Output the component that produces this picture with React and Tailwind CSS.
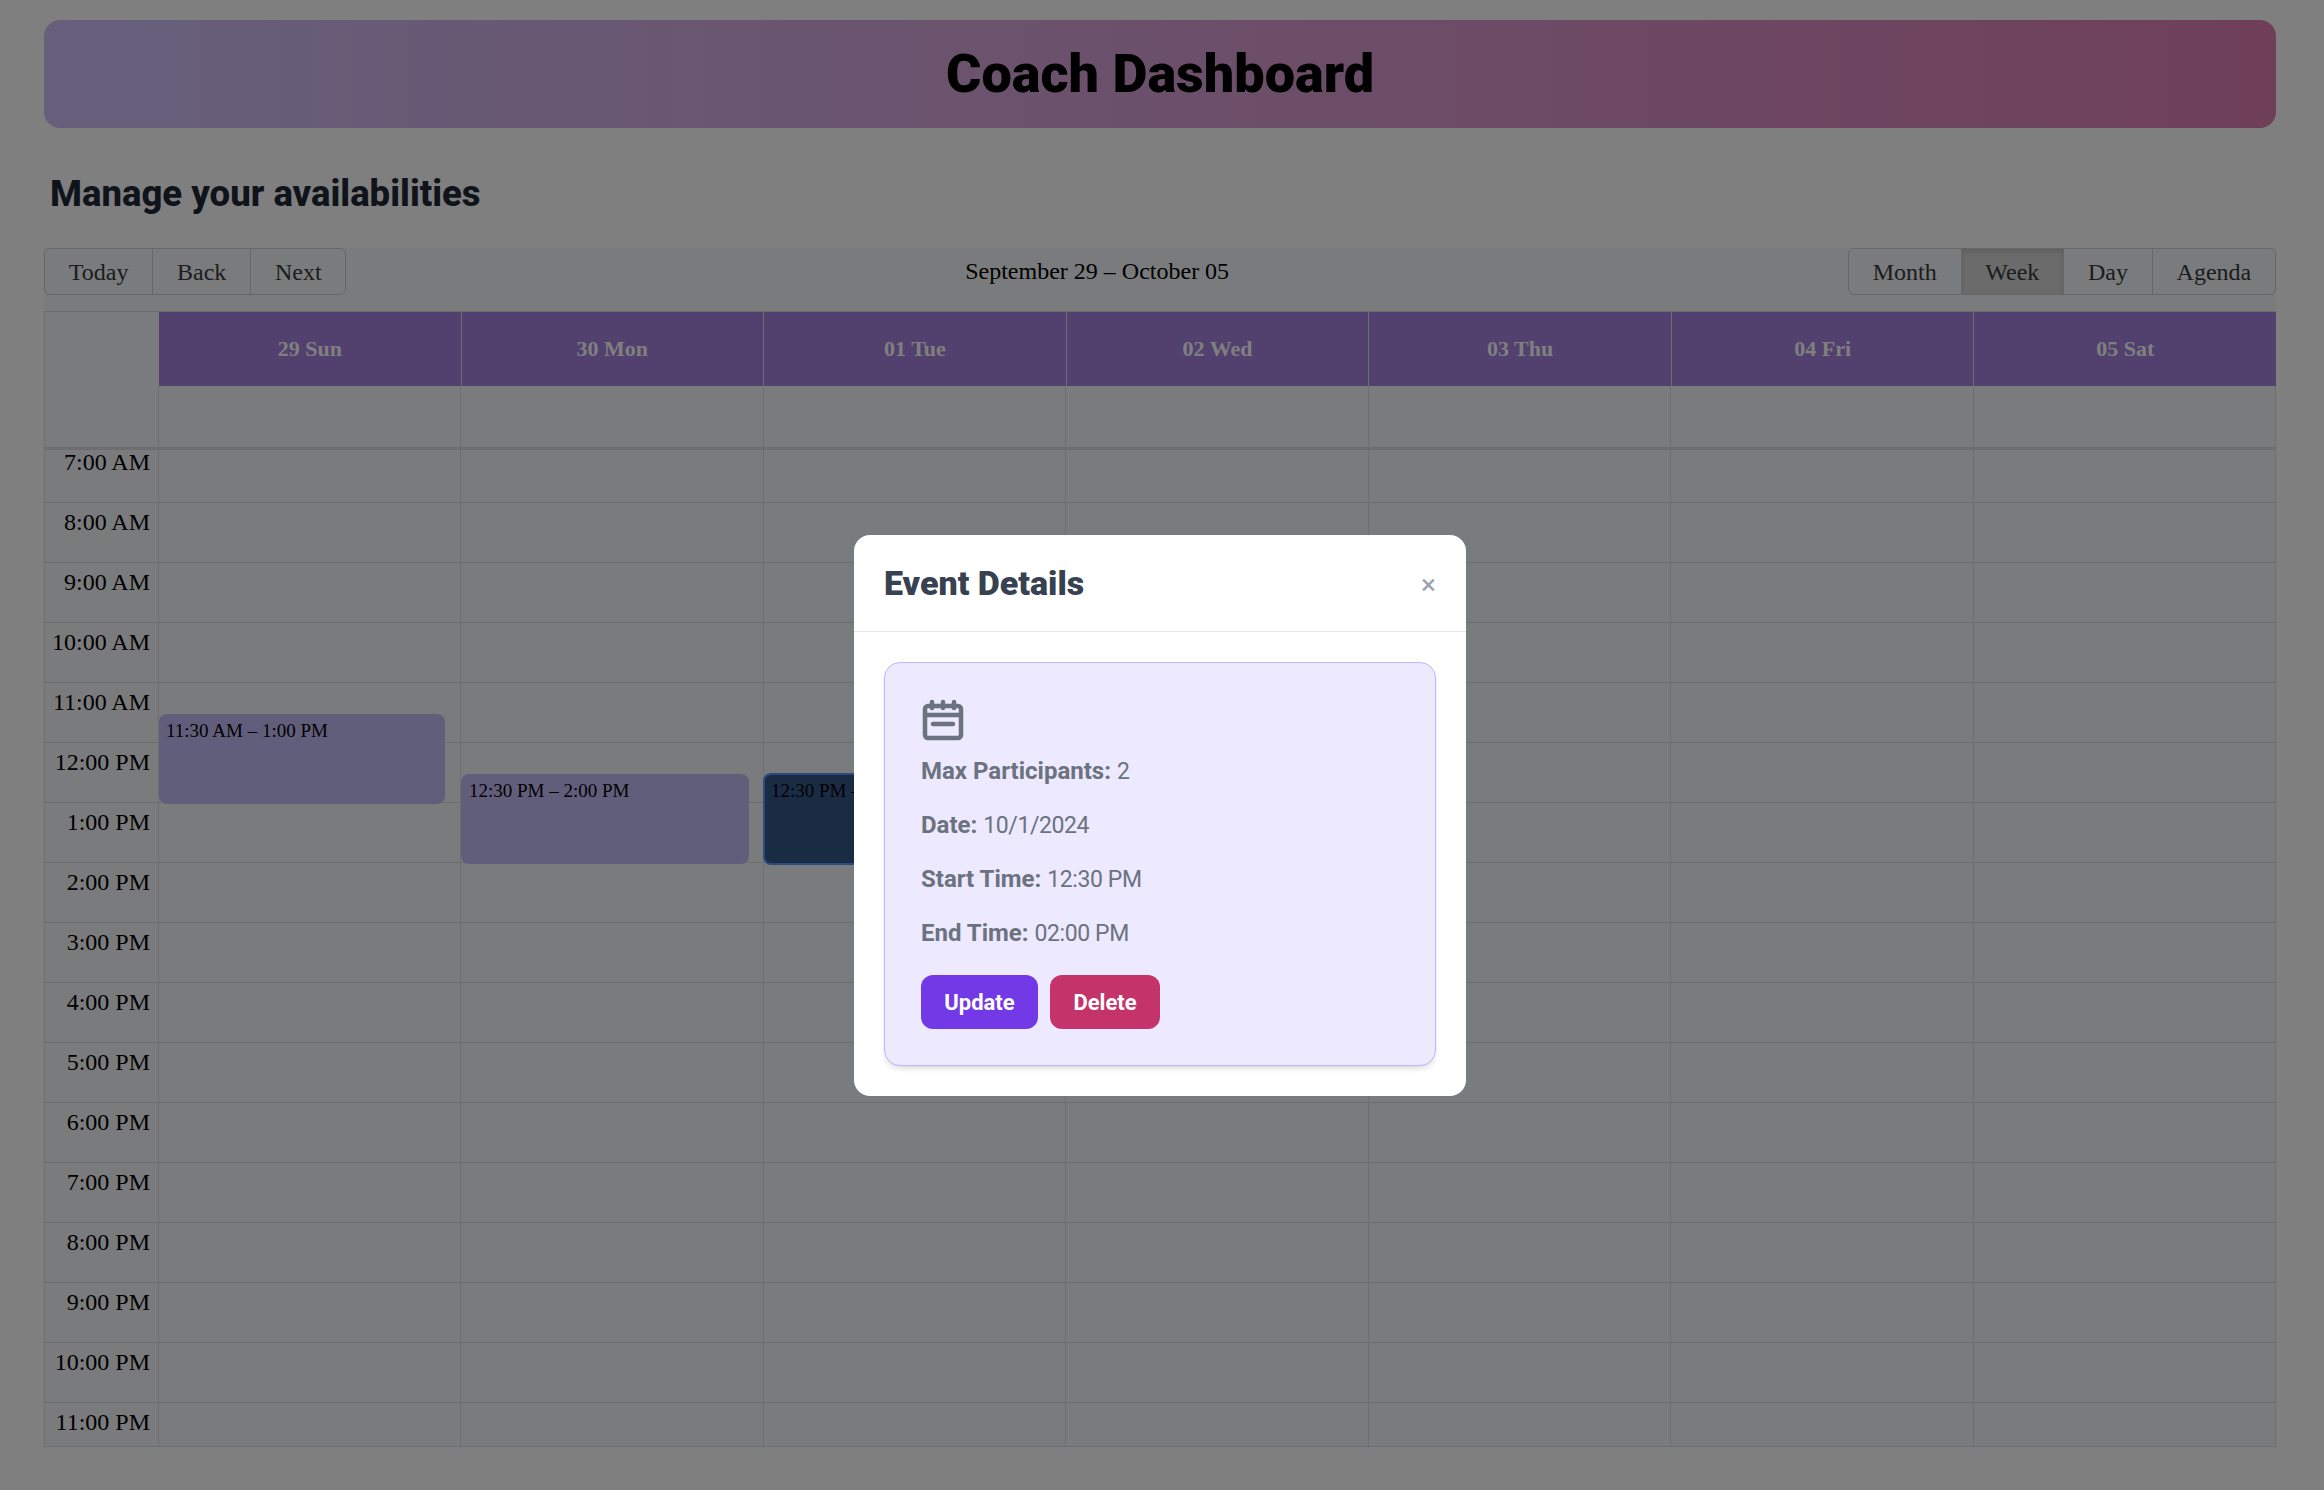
const days = ["29 Sun", "30 Mon", "01 Tue", "02 Wed", "03 Thu", "04 Fri", "05 Sat"];
const hours = ["7:00 AM", "8:00 AM", "9:00 AM", "10:00 AM", "11:00 AM", "12:00 PM", "1:00 PM", "2:00 PM", "3:00 PM", "4:00 PM", "5:00 PM", "6:00 PM", "7:00 PM", "8:00 PM", "9:00 PM", "10:00 PM", "11:00 PM"];

const btn = "h-[47px] px-[23.8px] border border-[#cccccc] -ml-px first:ml-0 first:rounded-l-md last:rounded-r-md text-[#373a3c]";

function CalendarIcon() {
  return (
    <svg className="ml-px" width="42" height="42" viewBox="0 0 42 42" fill="none" stroke="#6b7280" strokeWidth="4.5" strokeLinecap="round" strokeLinejoin="round">
      <rect x="3" y="7" width="36" height="32" rx="3" />
      <path d="M3 16h36M10 3v6M21 3v6M32 3v6M11 25h20" />
    </svg>
  );
}

function Toolbar() {
  return (
    <div className="flex items-start justify-between h-[63px] bg-[#f4f6f8] text-2xl">
      <div className="flex">
        <button className={btn}>Today</button>
        <button className={btn}>Back</button>
        <button className={btn}>Next</button>
      </div>
      <span className="leading-[47px] text-black">September 29 – October 05</span>
      <div className="flex">
        <button className={btn}>Month</button>
        <button className={btn + " bg-[#d6d6d6] shadow-[inset_0_3px_5px_rgba(0,0,0,0.125)]"}>Week</button>
        <button className={btn}>Day</button>
        <button className={btn}>Agenda</button>
      </div>
    </div>
  );
}

function WeekGrid() {
  return (
    <div className="bg-[#f4f6f8] border-t border-[#dddddd]">
      <div className="flex h-[74px] border-l border-[#dddddd]">
        <div className="w-[114px]" />
        {days.map((d, i) => (
          <div key={d} className={(i === 0 ? "" : "border-l border-[#dddddd] ") + "flex-1 flex items-center justify-center bg-[#a580dc] pb-[2px] text-[22px] font-bold text-white"}>
            {d}
          </div>
        ))}
      </div>
      <div className="flex h-[64px] border-x border-b-[3px] border-[#dddddd]">
        <div className="w-[113px]" />
        {days.map((d) => (
          <div key={d} className="flex-1 border-l border-[#dddddd]" />
        ))}
      </div>
      <div className="relative h-[997px] overflow-hidden border-x border-b border-[#dddddd]">
        <div className="-mt-[7px]">
          {hours.map((h) => (
            <div key={h} className="flex h-[60px] border-b border-[#dddddd]">
              <div className="w-[113px] pr-2 text-right text-2xl leading-[38px] text-black">{h}</div>
              {days.map((d) => (
                <div key={d} className="flex-1 border-l border-[#dddddd]" />
              ))}
            </div>
          ))}
        </div>
        <div className="absolute left-[114px] top-[264px] w-[286px] h-[90px] rounded-lg bg-[#c3bcf6] pl-[7px] py-[3px] text-[19px] text-black">11:30 AM – 1:00 PM</div>
        <div className="absolute left-[416px] top-[324px] w-[288px] h-[90px] rounded-lg bg-[#c3bcf6] px-2 py-[3px] text-[19px] text-black">12:30 PM – 2:00 PM</div>
        <div className="absolute left-[718px] top-[323px] w-[288px] h-[92px] rounded-lg bg-[#345888] border-2 border-[#5494ff] pl-[6px] py-[2px] text-[19px] text-black">12:30 PM – 2:00 PM</div>
      </div>
    </div>
  );
}

function EventModal() {
  const rows = [
    ["Max Participants:", "2"],
    ["Date:", "10/1/2024"],
    ["Start Time:", "12:30 PM"],
    ["End Time:", "02:00 PM"],
  ];
  return (
    <div className="fixed inset-0 z-10 flex items-start justify-center bg-black/50 pt-[535px] pr-[4px] font-['Roboto',sans-serif]">
      <div className="w-[612px] h-[561px] rounded-2xl bg-white">
        <div className="flex h-[97px] items-center justify-between border-b border-[#e5e7eb] px-[30px]">
          <h3 className="text-[34px] font-black text-[#374151]">Event Details</h3>
          <span className="pt-[3px] text-[28px] leading-none text-[#9ca3af]">×</span>
        </div>
        <div className="p-[30px]">
          <div className="h-[404px] rounded-2xl border border-[#c4b5fd] bg-[#ede9fe] px-[36px] pt-[36px] shadow-md">
            <CalendarIcon />
            <div className="mt-[14px] flex flex-col gap-[22px] text-[24px] leading-[32px] text-[#6b7280]">
              {rows.map(([k, v]) => (
                <p key={k} className="h-[32px]"><span className="font-bold">{k}</span> <span className="text-[23px] tracking-[-0.4px]">{v}</span></p>
              ))}
            </div>
            <div className="mt-[26px] flex gap-3">
              <button className="h-[54px] w-[117px] rounded-xl bg-[#7439e6] text-[22px] font-bold text-white">Update</button>
              <button className="h-[54px] w-[110px] rounded-xl bg-[#c43369] text-[22px] font-bold text-white">Delete</button>
            </div>
          </div>
        </div>
      </div>
    </div>
  );
}

export default function App() {
  return (
    <div className="min-h-screen bg-white pt-5 pl-[44px] pr-[48px] font-['Liberation_Serif',serif]">
      <header className="flex h-[108px] items-center justify-center rounded-2xl bg-gradient-to-r from-[#ccc0f8] to-[#de7eb4]">
        <h1 className="font-['Roboto',sans-serif] -mt-[2px] text-[54px] font-black text-black">Coach Dashboard</h1>
      </header>
      <h2 className="mt-[43px] mb-[31px] pl-[6px] font-['Roboto',sans-serif] text-[36.5px] leading-[46px] font-extrabold text-[#1f2937]">Manage your availabilities</h2>
      <Toolbar />
      <WeekGrid />
      <EventModal />
    </div>
  );
}
